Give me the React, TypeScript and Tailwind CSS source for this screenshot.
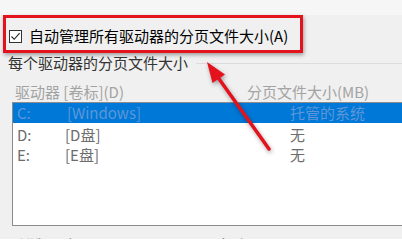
import React from "react";

const font = { fontFamily: '"Noto Sans CJK SC", "Noto Sans", sans-serif' };

export default function App() {
  return (
    <div
      className="relative w-[402px] h-[239px] overflow-hidden bg-[#f0f0f0] text-[15px] leading-[20px]"
      style={font}
    >
      <div className="h-[15px] bg-[#f6f6f6]" />
      {/* highlighted checkbox */}
      <div className="ml-[3px] w-[300px] h-[38px] border-[3px] border-[#e3121c] shadow-[1px_2px_4px_rgba(0,0,0,0.35)] flex items-center pl-[3px] pt-[4px] gap-[7px]">
        <span className="w-[13px] h-[13px] border border-[#333333] bg-white flex items-center justify-center">
          <svg width="11" height="11" viewBox="0 0 11 11">
            <path d="M1.5 5.5 L4.2 8.3 L9.6 2.2" fill="none" stroke="#222" strokeWidth="1.1" />
          </svg>
        </span>
        <span className="text-black">自动管理所有驱动器的分页文件大小(A)</span>
      </div>
      {/* group label */}
      <div className="h-[20px] flex items-center pl-[8px]">
        <span className="text-[#333333]">每个驱动器的分页文件大小</span>
        <div className="flex-1 h-px bg-[#dcdcdc] ml-[8px]" />
      </div>
      {/* header */}
      <div className="h-[29px] flex pt-[9px] pl-[15px] text-[#a3a3a3]">
        <span className="w-[232px]">驱动器 [卷标](D)</span>
        <span>分页文件大小(MB)</span>
      </div>
      {/* list */}
      <div className="ml-[12px] h-[124px] border border-r-0 border-[#8c8c8c] bg-white">
        <div className="h-[20px] bg-[#0078d7] flex items-center pl-[4px] text-[#5e96d6]">
          <span className="w-[50px]">C:</span>
          <span className="w-[223px]">[Windows]</span>
          <span>托管的系统</span>
        </div>
        <div className="h-[20px] flex items-center pl-[4px] pt-[4px] text-[#6d6d6d]">
          <span className="w-[48px]">D:</span>
          <span className="w-[225px]">[D盘]</span>
          <span>无</span>
        </div>
        <div className="h-[20px] flex items-center pl-[4px] pt-[4px] text-[#6d6d6d]">
          <span className="w-[48px]">E:</span>
          <span className="w-[225px]">[E盘]</span>
          <span>无</span>
        </div>
      </div>
      {/* bottom partial row */}
      <div className="flex pl-[15px] pt-[9px] text-[#6d6d6d]">
        <span className="w-[167px]">所选驱动器:</span>
        <span className="w-[21px]">C:</span>
        <span>[Windows]</span>
      </div>
      {/* red arrow overlay */}
      <svg
        className="absolute left-0 top-0 pointer-events-none"
        width="402"
        height="239"
        style={{ filter: "drop-shadow(1px 2px 2px rgba(0,0,0,0.35))" }}
      >
        <line x1="269" y1="149" x2="217" y2="76" stroke="#e3121c" strokeWidth="3.5" strokeLinecap="round" />
        <polygon points="207,62 225,74.5 212.5,83" fill="#e3121c" />
      </svg>
    </div>
  );
}
